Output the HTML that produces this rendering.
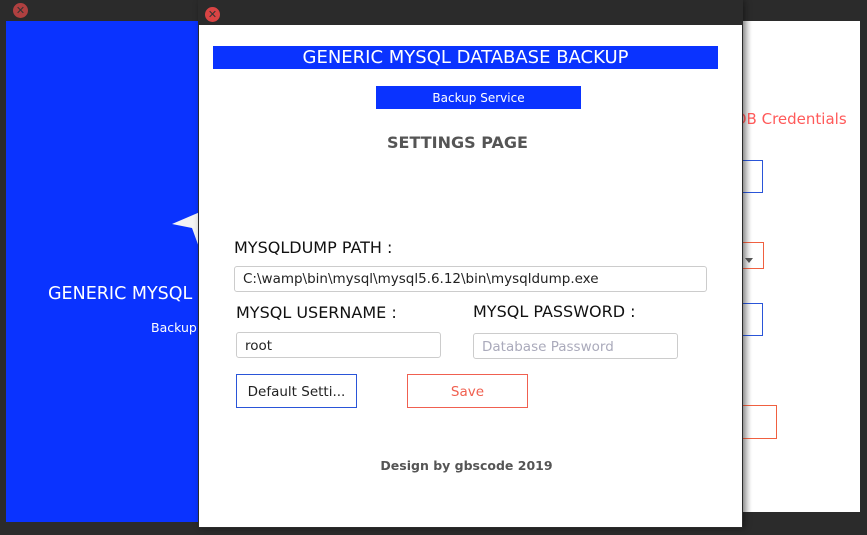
<!DOCTYPE html>
<html><head><meta charset="utf-8"><style>
*{margin:0;padding:0;box-sizing:border-box}
body{width:867px;height:535px;background:#2b2b2b;position:relative;overflow:hidden;font-family:"DejaVu Sans","Liberation Sans",sans-serif}
.a{position:absolute}
.close{position:absolute;width:15px;height:15px;border-radius:50%;background:#d94444;color:#333;font-size:11px;line-height:15px;text-align:center}
</style></head><body>
<!-- left window -->
<div class="a" style="left:6px;top:21px;width:194px;height:501px;background:#0a33ff"></div>
<div class="close" style="left:13px;top:3px;background:#b04040">✕</div>
<div class="a" style="left:48px;top:284px;color:#fff;font-size:17.5px;white-space:nowrap">GENERIC MYSQL</div>
<div class="a" style="left:151px;top:320px;color:#fff;font-size:12.5px">Backup</div>
<svg class="a" style="left:170px;top:210px" width="30" height="42"><path d="M2 14 L30 2 L30 40 L22 18 Z" fill="#f4f4f4"/></svg>
<!-- right window -->
<div class="a" style="left:742px;top:21px;width:118px;height:491px;background:#fff"></div>
<div class="a" style="left:742px;top:21px;width:10px;height:491px;background:linear-gradient(90deg,#ccc,#fff)"></div>
<div class="a" style="left:735px;top:110px;color:#ff5a5a;font-size:15px;white-space:nowrap">DB Credentials</div>
<div class="a" style="left:730px;top:160px;width:33px;height:33px;border:1px solid #2a55d8"></div>
<div class="a" style="left:730px;top:242px;width:34px;height:27px;border:1px solid #f06040"></div>
<div class="a" style="left:745px;top:258px;width:0;height:0;border-left:4px solid transparent;border-right:4px solid transparent;border-top:5px solid #555"></div>
<div class="a" style="left:730px;top:303px;width:33px;height:33px;border:1px solid #2a55d8"></div>
<div class="a" style="left:730px;top:405px;width:47px;height:34px;border:1px solid #f06040"></div>
<!-- main window -->
<div class="a" style="left:198px;top:0;width:545px;height:528px;background:#2b2b2b;box-shadow:2px 0 6px rgba(0,0,0,.4)"></div>
<div class="close" style="left:205px;top:7px">✕</div>
<div class="a" style="left:199px;top:25px;width:543px;height:502px;background:#fff"></div>
<div class="a" style="left:213px;top:46px;width:505px;height:23px;background:#0a33ff;color:#fff;font-size:18px;line-height:23px;text-align:center;white-space:nowrap">GENERIC MYSQL DATABASE BACKUP</div>
<div class="a" style="left:376px;top:86px;width:205px;height:23px;background:#0a33ff;color:#fff;font-size:12px;line-height:24px;text-align:center">Backup Service</div>
<div class="a" style="left:300px;top:133px;width:315px;text-align:center;color:#555;font-size:16px;font-weight:bold">SETTINGS PAGE</div>
<div class="a" style="left:234px;top:238px;color:#111;font-size:16px">MYSQLDUMP PATH :</div>
<div class="a" style="left:234px;top:266px;width:473px;height:26px;border:1px solid #ccc;border-radius:3px;font-size:13.5px;line-height:25px;padding-left:8px;color:#222">C:\wamp\bin\mysql\mysql5.6.12\bin\mysqldump.exe</div>
<div class="a" style="left:236px;top:303px;color:#111;font-size:16px">MYSQL USERNAME :</div>
<div class="a" style="left:473px;top:302px;color:#111;font-size:16px">MYSQL PASSWORD :</div>
<div class="a" style="left:236px;top:332px;width:205px;height:26px;border:1px solid #ccc;border-radius:3px;font-size:13.5px;line-height:26px;padding-left:8px;color:#222">root</div>
<div class="a" style="left:473px;top:333px;width:205px;height:26px;border:1px solid #ccc;border-radius:3px;font-size:13.5px;line-height:26px;padding-left:8px;color:#aab">Database Password</div>
<div class="a" style="left:236px;top:374px;width:121px;height:34px;border:1px solid #2a55d8;font-size:13.5px;line-height:34px;text-align:center;color:#222">Default Setti...</div>
<div class="a" style="left:407px;top:374px;width:121px;height:34px;border:1px solid #f06050;font-size:13.5px;line-height:34px;text-align:center;color:#f06050">Save</div>
<div class="a" style="left:300px;top:458px;width:333px;text-align:center;color:#555;font-size:12.5px;font-weight:bold">Design by gbscode 2019</div>
</body></html>
